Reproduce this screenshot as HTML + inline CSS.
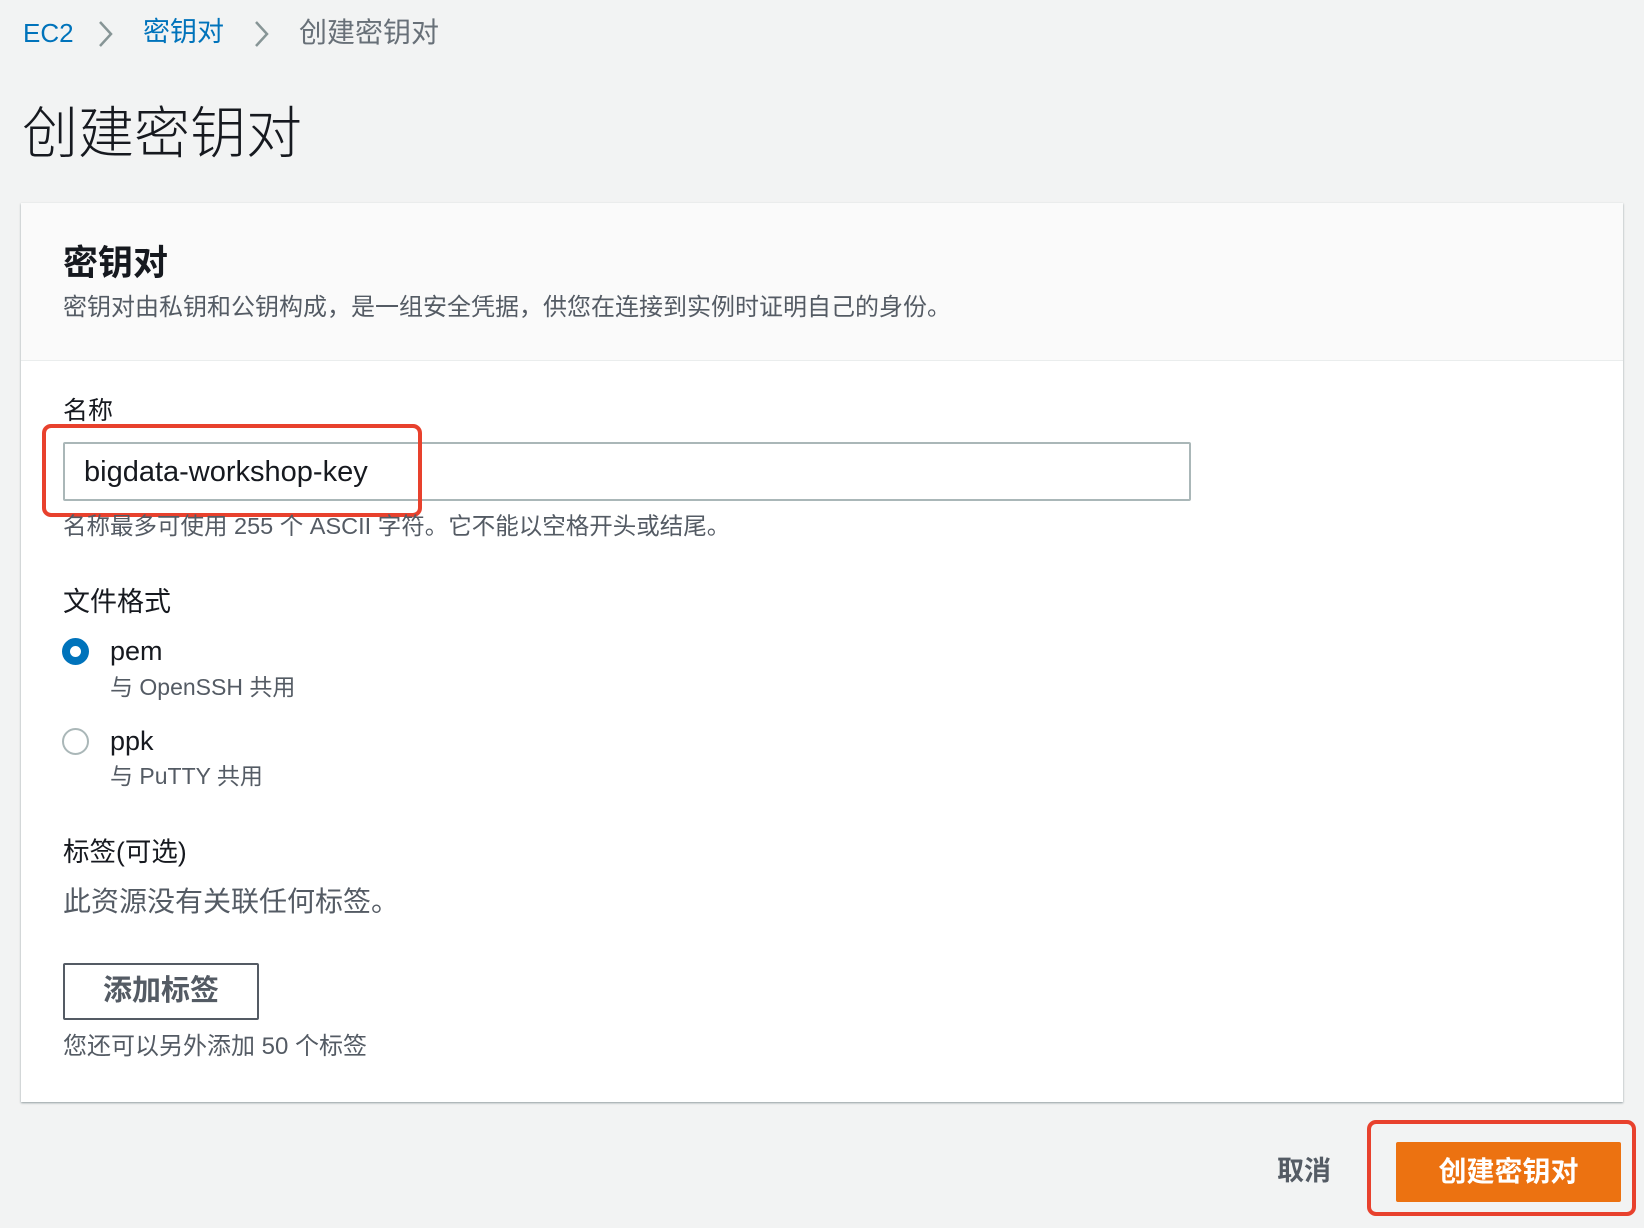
<!DOCTYPE html>
<html><head><meta charset="utf-8"><style>
*{margin:0;padding:0;box-sizing:border-box}
body{width:1644px;height:1228px;background:#f2f3f3;font-family:"Liberation Sans","Noto Sans CJK SC",sans-serif;position:relative;overflow:hidden;color:#16191f}
.a{position:absolute;white-space:nowrap;line-height:1}
.g{color:#545b64}
</style></head><body>
<div class="a" style="left:23px;top:20px;font-size:26px;color:#0073bb">EC2</div>
<svg class="a" style="left:97px;top:19px" width="18" height="30"><path d="M3 3 L14 15 L3 27" fill="none" stroke="#879596" stroke-width="2.5"/></svg>
<div class="a" style="left:143px;top:19px;font-size:27px;color:#0073bb">密钥对</div>
<svg class="a" style="left:253px;top:19px" width="18" height="30"><path d="M3 3 L14 15 L3 27" fill="none" stroke="#879596" stroke-width="2.5"/></svg>
<div class="a g" style="left:299px;top:19px;font-size:28px;color:#687078">创建密钥对</div>
<div class="a" style="left:22px;top:106px;font-size:56px;font-weight:300">创建密钥对</div>

<div class="a" style="left:21px;top:203px;width:1602px;height:899px;background:#fff;box-shadow:0 1px 2px rgba(0,28,36,.4)">
  <div style="height:158px;background:#fafafa;border-bottom:1px solid #eaeded"></div>
</div>
<div class="a" style="left:63px;top:246px;font-size:35px;font-weight:bold">密钥对</div>
<div class="a g" style="left:63px;top:296px;font-size:24px">密钥对由私钥和公钥构成，是一组安全凭据，供您在连接到实例时证明自己的身份。</div>

<div class="a" style="left:63px;top:399px;font-size:25px">名称</div>
<div class="a" style="left:63px;top:442px;width:1128px;height:59px;border:2px solid #aab7b8;border-radius:2px;background:#fff"></div>
<div class="a" style="left:84px;top:458px;font-size:29px">bigdata-workshop-key</div>
<div class="a" style="left:42px;top:424px;width:380px;height:93px;border:4px solid #e8412d;border-radius:9px"></div>
<div class="a g" style="left:63px;top:515px;font-size:23.5px">名称最多可使用 255 个 ASCII 字符。它不能以空格开头或结尾。</div>

<div class="a" style="left:63px;top:589px;font-size:27px">文件格式</div>
<div class="a" style="left:62px;top:638px;width:27px;height:27px;border-radius:50%;border:8px solid #0073bb;background:#fff"></div>
<div class="a" style="left:110px;top:638px;font-size:27px">pem</div>
<div class="a g" style="left:110px;top:676px;font-size:23px">与 OpenSSH 共用</div>
<div class="a" style="left:62px;top:728px;width:27px;height:27px;border-radius:50%;border:2px solid #aab7b8;background:#fff"></div>
<div class="a" style="left:110px;top:728px;font-size:27px">ppk</div>
<div class="a g" style="left:110px;top:765px;font-size:23px">与 PuTTY 共用</div>

<div class="a" style="left:63px;top:839px;font-size:26.5px">标签(可选)</div>
<div class="a g" style="left:63px;top:888px;font-size:28px">此资源没有关联任何标签。</div>
<div class="a" style="left:63px;top:963px;width:196px;height:57px;border:2px solid #545b64;border-radius:2px;background:#fff;font-size:29px;font-weight:bold;color:#545b64;display:flex;align-items:center;justify-content:center">添加标签</div>
<div class="a g" style="left:63px;top:1035px;font-size:24px">您还可以另外添加 50 个标签</div>

<div class="a" style="left:1277px;top:1158px;font-size:27px;font-weight:bold;color:#545b64">取消</div>
<div class="a" style="left:1396px;top:1142px;width:225px;height:60px;background:#ec7211;border-radius:2px;color:#fff;font-size:28px;font-weight:bold;display:flex;align-items:center;justify-content:center">创建密钥对</div>
<div class="a" style="left:1367px;top:1120px;width:269px;height:96px;border:4px solid #e8412d;border-radius:9px"></div>
</body></html>
